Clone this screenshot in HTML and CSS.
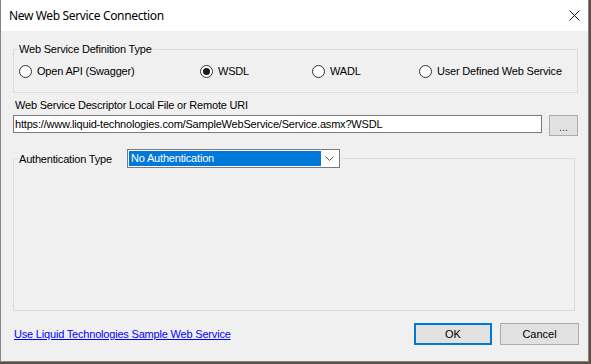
FILE: index.html
```html
<!DOCTYPE html>
<html lang="en">
<head>
    <meta charset="UTF-8">
    <meta name="viewport" content="width=device-width, initial-scale=1.0">
    <title>New Web Service Connection</title>
    <link rel="stylesheet" href="styles.css">
</head>
<body>
    <div class="window">
        <div class="titlebar">
            <span class="title">New Web Service Connection</span>
            <svg class="close" width="11" height="11" viewBox="0 0 11 11">
                <path d="M0.5 0.5 L10.5 10.5 M10.5 0.5 L0.5 10.5" stroke="#1a1a1a" stroke-width="1" fill="none"/>
            </svg>
        </div>
        <div class="content">
            <fieldset class="group type-group">
                <legend>Web Service Definition Type</legend>
                <div class="radio-row">
                    <label class="radio"><span class="dot"></span>Open API (Swagger)</label>
                    <label class="radio"><span class="dot on"></span>WSDL</label>
                    <label class="radio"><span class="dot"></span>WADL</label>
                    <label class="radio"><span class="dot"></span>User Defined Web Service</label>
                </div>
            </fieldset>

            <div class="field-label">Web Service Descriptor Local File or Remote URI</div>
            <div class="uri-row">
                <div class="textbox">https://www.liquid-technologies.com/SampleWebService/Service.asmx?WSDL</div>
                <button class="btn browse">...</button>
            </div>

            <fieldset class="group auth-group">
                <legend class="auth-legend">
                    <span class="auth-label">Authentication Type</span>
                    <div class="combo">
                        <span class="combo-value">No Authentication</span>
                        <span class="combo-arrow">
                            <svg width="9" height="5" viewBox="0 0 9 5">
                                <path d="M0.5 0.5 L4.5 4.5 L8.5 0.5" stroke="#5a5a5a" stroke-width="1" fill="none"/>
                            </svg>
                        </span>
                    </div>
                </legend>
                <div class="auth-body"></div>
            </fieldset>

            <div class="footer">
                <a class="link" href="#">Use Liquid Technologies Sample Web Service</a>
                <div class="buttons">
                    <button class="btn ok">OK</button>
                    <button class="btn cancel">Cancel</button>
                </div>
            </div>
        </div>
    </div>
</body>
</html>
```

FILE: styles.css
```css
body {
    margin: 0;
    background-color: #5b5048;
    font-family: "Liberation Sans", Arial, sans-serif;
    font-size: 11px;
    letter-spacing: -0.19px;
    color: #000000;
}
.window {
    width: 587px;
    height: 361px;
    border: 1px solid #858585;
    border-top: none;
    background-color: #f0f0f0;
}
.titlebar {
    height: 31px;
    background-color: #ffffff;
    display: flex;
    align-items: center;
    justify-content: space-between;
    padding: 0 8px;
}
.title {
    font-family: "Noto Sans", "Open Sans", sans-serif;
    font-size: 12px;
    letter-spacing: -0.35px;
    color: #000000;
}
.content {
    padding: 0 9px 0 12px;
}
.group {
    margin: 0;
    border: 1px solid #dcdcdc;
    min-width: 0;
    box-sizing: border-box;
}
.group legend {
    padding: 0 1px;
    line-height: 14px;
}
.type-group {
    width: 565px;
    margin-top: 11px;
    padding: 8px 10px 14px 4px;
}
.radio-row {
    display: grid;
    grid-template-columns: 181px 112px 107px auto;
    margin-left: 1px;
}
.radio {
    display: flex;
    align-items: center;
    gap: 5px;
    height: 14px;
    line-height: 14px;
}
.dot {
    width: 13px;
    height: 13px;
    box-sizing: border-box;
    border: 1px solid #333333;
    border-radius: 50%;
    background-color: #ffffff;
    display: flex;
    justify-content: center;
    align-items: center;
}
.dot.on::after {
    content: "";
    width: 7px;
    height: 7px;
    border-radius: 50%;
    background-color: #1a1a1a;
}
.field-label {
    margin-top: 5px;
    padding-left: 2px;
    line-height: 14px;
}
.uri-row {
    display: flex;
    align-items: flex-start;
    gap: 7px;
    margin-top: 3px;
}
.textbox {
    width: 529px;
    height: 18px;
    box-sizing: border-box;
    border: 1px solid #7a7a7a;
    background-color: #ffffff;
    padding-left: 1px;
    line-height: 16px;
    white-space: nowrap;
}
.btn {
    box-sizing: border-box;
    border: 1px solid #adadad;
    background-color: #e1e1e1;
    font: inherit;
    color: #000000;
    padding: 0;
}
.browse {
    width: 29px;
    height: 21px;
    color: #444444;
    padding-top: 3px;
}
.auth-group {
    width: 562px;
    margin-top: 13px;
    padding: 0 0 0 4px;
}
.auth-legend {
    display: flex;
    align-items: center;
}
.auth-label {
    width: 108px;
}
.combo {
    width: 213px;
    height: 19px;
    box-sizing: border-box;
    border: 1px solid #7a7a7a;
    background-color: #ffffff;
    padding: 1px;
    display: flex;
    align-items: center;
}
.combo-value {
    width: 192px;
    height: 15px;
    box-sizing: border-box;
    background-color: #0078d7;
    color: #ffffff;
    line-height: 15px;
    padding-left: 2px;
}
.combo-arrow {
    flex: 1;
    display: flex;
    justify-content: center;
    align-items: center;
}
.combo-arrow svg {
    display: block;
}
.auth-body {
    height: 142px;
}
.footer {
    display: flex;
    justify-content: space-between;
    align-items: center;
    margin-top: 12px;
}
.link {
    color: #0000ff;
    text-decoration: underline;
    padding-left: 1px;
}
.buttons {
    display: flex;
    gap: 8px;
}
.ok {
    width: 78px;
    height: 22px;
    border: 2px solid #0078d7;
}
.cancel {
    width: 79px;
    height: 22px;
}
```
